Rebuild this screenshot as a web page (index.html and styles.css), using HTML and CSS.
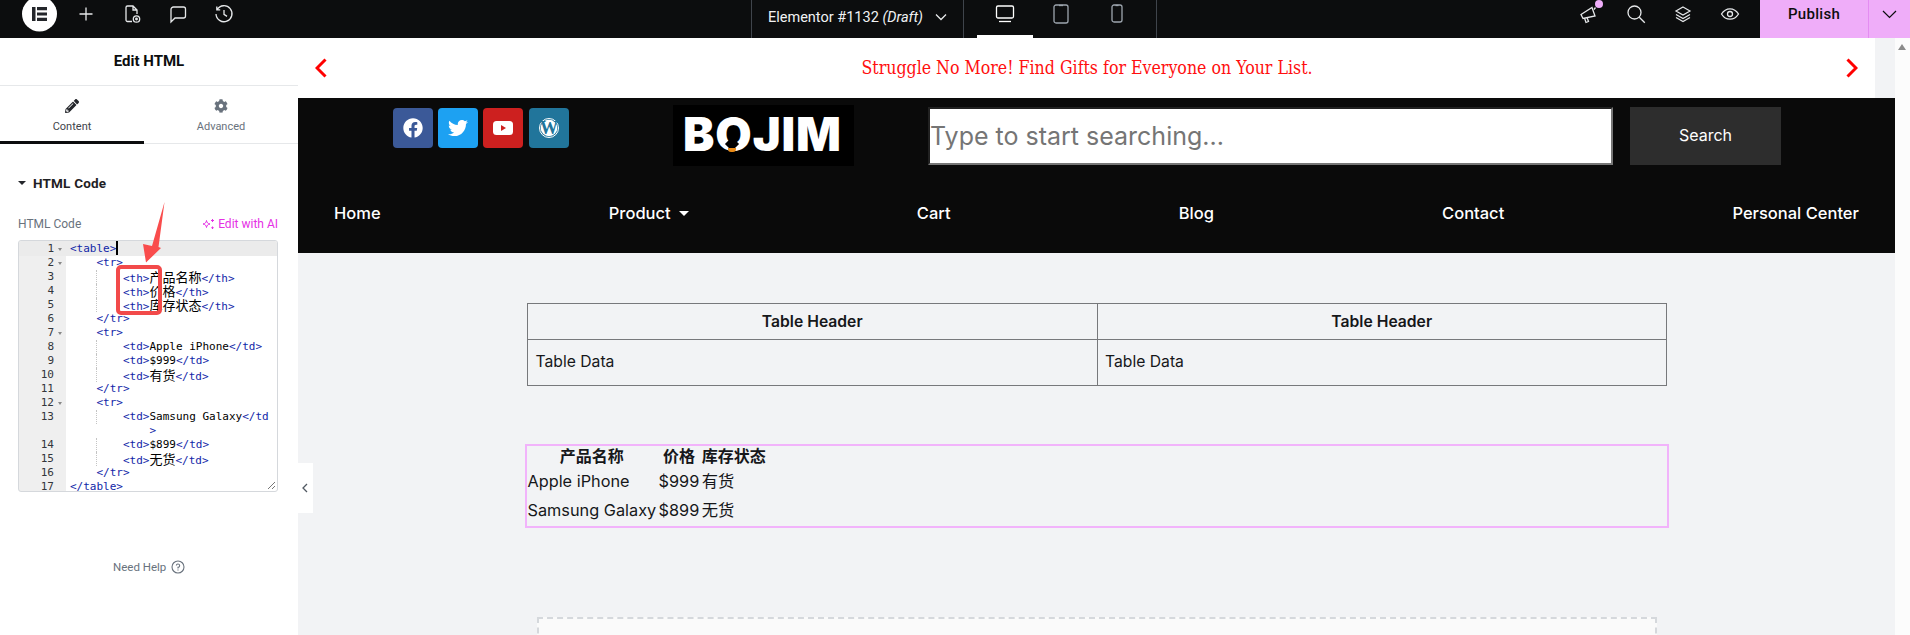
FILE: index.html
```html
<!DOCTYPE html>
<html lang="en">
<head>
<meta charset="utf-8">
<title>Edit HTML</title>
<link rel="stylesheet" href="styles.css">
</head>
<body>
<header class="topbar">
  <div class="tb-left">
    <svg class="e-logo" width="35" height="38" viewBox="0 0 35 38"><circle cx="17.5" cy="14" r="17.5" fill="#fff"/><path d="M10 7h3.5v14H10zM15 7h10v3.2H15zM15 12.4h10v3.2H15zM15 17.8h10V21H15z" fill="#24262b"/></svg>
    <svg class="tb-i" width="20" height="20" viewBox="0 0 20 20" fill="none" stroke="#e6e8ea" stroke-width="1.3"><path d="M10 3.5v13M3.5 10h13"/></svg>
    <svg class="tb-i" width="20" height="20" viewBox="0 0 20 20" fill="none" stroke="#e6e8ea" stroke-width="1.3"><path d="M10 17.5H5.5A1.5 1.5 0 0 1 4 16V3.5A1.5 1.5 0 0 1 5.5 2h5.5l4 4v4M11 2v4h4"/><circle cx="14.5" cy="15" r="3.2"/><circle cx="14.5" cy="15" r=".8"/></svg>
    <svg class="tb-i" width="20" height="20" viewBox="0 0 20 20" fill="none" stroke="#e6e8ea" stroke-width="1.3"><path d="M3 5.5A2.5 2.5 0 0 1 5.5 3h10A2 2 0 0 1 17.500 5v7a2 2 0 0 1-2 2H7l-4 4z"/></svg>
    <svg class="tb-i" width="20" height="20" viewBox="0 0 20 20" fill="none" stroke="#e6e8ea" stroke-width="1.3"><path d="M3.200 5.500A8 8 0 1 1 2 10M2.800 2.500v3.400h3.400M10 6v4.400l3 2"/></svg>
  </div>
  <div class="tb-center">
    <div class="doc-title"><span>Elementor #1132 <em>(Draft)</em></span>
      <svg width="12" height="8" viewBox="0 0 12 8" fill="none" stroke="#e6e8ea" stroke-width="1.300"><path d="M1 1.500l5 5 5-5"/></svg>
    </div>
    <div class="devices">
      <div class="dev active"><svg width="20" height="20" viewBox="0 0 20 20" fill="none" stroke="#fff" stroke-width="1.300"><rect x="1.500" y="2" width="17" height="12" rx="1.500"/><path d="M4 17.500h12"/></svg></div>
      <div class="dev"><svg width="16" height="20" viewBox="0 0 16 20" fill="none" stroke="#9da5ae" stroke-width="1.300"><rect x="1" y="1" width="14" height="18" rx="2"/><path d="M6 1.500h4"/></svg></div>
      <div class="dev"><svg width="12" height="19" viewBox="0 0 12 19" fill="none" stroke="#9da5ae" stroke-width="1.300"><rect x="1" y="1" width="10" height="17" rx="2"/><path d="M4.500 1.500h3"/></svg></div>
    </div>
  </div>
  <div class="tb-right">
    <span class="tb-r-i notify"><svg width="20" height="20" viewBox="0 0 20 20" fill="none" stroke="#e6e8ea" stroke-width="1.300"><path d="M2 10.500l11-7 3 8.500-12 2.500zM5.500 14l1.500 4.500 2.500-1L8 13.500M15 5.500l1.500-2"/></svg></span>
    <span class="tb-r-i"><svg width="20" height="20" viewBox="0 0 20 20" fill="none" stroke="#e6e8ea" stroke-width="1.300"><circle cx="8.500" cy="8.500" r="6.500"/><path d="M13.300 13.300l5.500 5.500"/></svg></span>
    <span class="tb-r-i"><svg width="20" height="20" viewBox="0 0 20 20" fill="none" stroke="#e6e8ea" stroke-width="1.200"><path d="M10 3l7 4-7 4-7-4zM3 10.500l7 4 7-4M3 13.500l7 4 7-4"/></svg></span>
    <span class="tb-r-i"><svg width="20" height="20" viewBox="0 0 20 20" fill="none" stroke="#e6e8ea" stroke-width="1.300"><path d="M1.500 10C4 6 7 4.800 10 4.800S16 6 18.500 10C16 14 13 15.200 10 15.200S4 14 1.500 10z"/><circle cx="10" cy="10" r="2.500"/></svg></span>
    <div class="publish">
      <span class="pub-text">Publish</span>
      <span class="pub-arrow"><svg width="15" height="9" viewBox="0 0 15 9" fill="none" stroke="#0c0d0e" stroke-width="1.200"><path d="M1 1l6.500 6.500L14 1"/></svg></span>
    </div>
  </div>
</header>

<div class="main">
  <aside class="sidebar">
    <h1 class="panel-title">Edit HTML</h1>
    <div class="tabs">
      <div class="tab on">
        <svg width="14" height="14" viewBox="0 0 512 512"><path fill="#24262b" d="M497.900 142.100l-46.100 46.100c-4.700 4.700-12.300 4.700-17 0l-111-111c-4.700-4.700-4.700-12.300 0-17l46.100-46.100c18.700-18.700 49.100-18.700 67.900 0l60.100 60.100c18.800 18.700 18.800 49.100 0 67.900zM284.200 99.800L21.600 362.400.4 483.900c-2.900 16.400 11.400 30.600 27.800 27.800l121.500-21.300 262.600-262.600c4.700-4.700 4.700-12.300 0-17l-111-111c-4.800-4.700-12.400-4.700-17.100 0zM124.100 339.900c-5.500-5.500-5.500-14.300 0-19.800l154-154c5.500-5.500 14.300-5.500 19.800 0s5.500 14.300 0 19.800l-154 154c-5.500 5.500-14.300 5.500-19.800 0zM88 424h48v36.300l-64.500 11.300-31.100-31.100L51.700 376H88v48z"/></svg>
        <span>Content</span>
      </div>
      <div class="tab">
        <svg width="14" height="14" viewBox="0 0 512 512"><path fill="#69727d" d="M487.400 315.700l-42.600-24.600c4.300-23.200 4.300-47 0-70.200l42.600-24.600c4.900-2.800 7.100-8.600 5.500-14-11.100-35.600-30-67.800-54.700-94.600-3.800-4.100-10-5.100-14.800-2.300L380.800 110c-17.900-15.400-38.500-27.300-60.800-35.100V25.800c0-5.600-3.900-10.500-9.400-11.700-36.700-8.200-74.300-7.800-109.200 0-5.500 1.200-9.400 6.100-9.400 11.700V75c-22.200 7.900-42.800 19.800-60.800 35.100L88.700 85.500c-4.900-2.800-11-1.900-14.800 2.300-24.700 26.700-43.600 58.900-54.700 94.600-1.700 5.400.6 11.200 5.500 14L67.300 221c-4.300 23.200-4.300 47 0 70.200l-42.600 24.600c-4.900 2.800-7.100 8.600-5.500 14 11.100 35.600 30 67.800 54.700 94.600 3.800 4.100 10 5.100 14.800 2.300l42.600-24.600c17.900 15.400 38.500 27.300 60.800 35.100v49.200c0 5.600 3.900 10.500 9.400 11.700 36.700 8.200 74.300 7.800 109.200 0 5.500-1.200 9.400-6.100 9.400-11.700v-49.200c22.200-7.900 42.800-19.800 60.800-35.100l42.600 24.600c4.900 2.800 11 1.900 14.800-2.300 24.700-26.700 43.600-58.900 54.700-94.600 1.500-5.500-.7-11.300-5.600-14.100zM256 336c-44.100 0-80-35.900-80-80s35.900-80 80-80 80 35.900 80 80-35.900 80-80 80z"/></svg>
        <span>Advanced</span>
      </div>
    </div>
    <div class="section-head"><i class="caret"></i><span>HTML Code</span></div>
    <div class="field-head">
      <span class="field-label">HTML Code</span>
      <span class="ai"><svg width="13" height="12" viewBox="0 0 13 12" fill="none" stroke="#e530e5" stroke-width="1"><path d="M4.500 2.500c.4 2.200 1.300 3.100 3.500 3.500-2.200.4-3.100 1.300-3.500 3.500C4.100 7.300 3.200 6.400 1 6c2.200-.4 3.100-1.300 3.500-3.500zM10.500 1v3M9 2.500h3M10.500 8.500v2.500M9.300 9.700h2.400"/></svg>Edit with AI</span>
    </div>
    <div class="editor">
      <div class="row act"><span class="num">1</span><span class="fold f"></span><span class="code"><span class="t">&lt;table&gt;</span><i class="cursor"></i></span></div>
      <div class="row"><span class="num">2</span><span class="fold f"></span><span class="code">    <span class="t">&lt;tr&gt;</span></span></div>
      <div class="row"><span class="num">3</span><span class="fold"></span><span class="code g">        <span class="t">&lt;th&gt;</span><span class="c">产品名称</span><span class="t">&lt;/th&gt;</span></span></div>
      <div class="row"><span class="num">4</span><span class="fold"></span><span class="code g">        <span class="t">&lt;th&gt;</span><span class="c">价格</span><span class="t">&lt;/th&gt;</span></span></div>
      <div class="row"><span class="num">5</span><span class="fold"></span><span class="code g">        <span class="t">&lt;th&gt;</span><span class="c">库存状态</span><span class="t">&lt;/th&gt;</span></span></div>
      <div class="row"><span class="num">6</span><span class="fold"></span><span class="code">    <span class="t">&lt;/tr&gt;</span></span></div>
      <div class="row"><span class="num">7</span><span class="fold f"></span><span class="code">    <span class="t">&lt;tr&gt;</span></span></div>
      <div class="row"><span class="num">8</span><span class="fold"></span><span class="code g">        <span class="t">&lt;td&gt;</span>Apple iPhone<span class="t">&lt;/td&gt;</span></span></div>
      <div class="row"><span class="num">9</span><span class="fold"></span><span class="code g">        <span class="t">&lt;td&gt;</span>$999<span class="t">&lt;/td&gt;</span></span></div>
      <div class="row"><span class="num">10</span><span class="fold"></span><span class="code g">        <span class="t">&lt;td&gt;</span><span class="c">有货</span><span class="t">&lt;/td&gt;</span></span></div>
      <div class="row"><span class="num">11</span><span class="fold"></span><span class="code">    <span class="t">&lt;/tr&gt;</span></span></div>
      <div class="row"><span class="num">12</span><span class="fold f"></span><span class="code">    <span class="t">&lt;tr&gt;</span></span></div>
      <div class="row"><span class="num">13</span><span class="fold"></span><span class="code g">        <span class="t">&lt;td&gt;</span>Samsung Galaxy<span class="t">&lt;/td</span></span></div>
      <div class="row"><span class="num"></span><span class="fold"></span><span class="code">            <span class="t">&gt;</span></span></div>
      <div class="row"><span class="num">14</span><span class="fold"></span><span class="code g">        <span class="t">&lt;td&gt;</span>$899<span class="t">&lt;/td&gt;</span></span></div>
      <div class="row"><span class="num">15</span><span class="fold"></span><span class="code g">        <span class="t">&lt;td&gt;</span><span class="c">无货</span><span class="t">&lt;/td&gt;</span></span></div>
      <div class="row"><span class="num">16</span><span class="fold"></span><span class="code">    <span class="t">&lt;/tr&gt;</span></span></div>
      <div class="row"><span class="num">17</span><span class="fold"></span><span class="code"><span class="t">&lt;/table&gt;</span></span></div>
      <svg class="resize" width="9" height="9" viewBox="0 0 9 9" stroke="#777" fill="none"><path d="M1 8l7-7M5 8l3-3"/></svg>
    </div>
    <div class="help"><span>Need Help</span><svg width="14" height="14" viewBox="0 0 14 14" fill="none" stroke="#69727d" stroke-width="1.100"><circle cx="7" cy="7" r="6"/><path d="M5.300 5.500A1.700 1.700 0 1 1 7 7.400v1M7 9.500v1.100"/></svg></div>
    <div class="mark-box"></div>
    <svg class="mark-arrow" width="24" height="64" viewBox="0 0 24 64"><path fill="#f94c4c" d="M22.500 0L16.500 45l2.500 1-15 14.500L1 42l9 2z"/></svg>
  </aside>
  <div class="collapse"><svg width="6" height="10" viewBox="0 0 6 10" fill="none" stroke="#515962" stroke-width="1.300"><path d="M5 1L1 5l4 4"/></svg></div>

  <main class="canvas">
    <div class="banner">
      <svg width="12" height="20" viewBox="0 0 12 20" fill="none" stroke="#ff0000" stroke-width="3"><path d="M10.500 1.500L2 10l8.500 8.500"/></svg>
      <span class="banner-text">Struggle No More! Find Gifts for Everyone on Your List.</span>
      <svg width="12" height="20" viewBox="0 0 12 20" fill="none" stroke="#ff0000" stroke-width="3"><path d="M1.500 1.500L10 10l-8.500 8.500"/></svg>
    </div>
    <div class="site-head">
      <div class="head-row">
        <div class="social">
          <a class="soc fb"><svg width="20" height="20" viewBox="0 0 512 512"><path fill="#fff" d="M504 256C504 119 393 8 256 8S8 119 8 256c0 123.780 90.690 226.380 209.250 245V327.690h-63V256h63v-54.640c0-62.150 37-96.480 93.670-96.480 27.140 0 55.520 4.840 55.520 4.840v61h-31.280c-30.800 0-40.410 19.120-40.410 38.730V256h68.780l-11 71.690h-57.780V501C413.310 482.380 504 379.780 504 256z"/></svg></a>
          <a class="soc tw"><svg width="20" height="20" viewBox="0 0 512 512"><path fill="#fff" d="M459.370 151.716c.325 4.548.325 9.097.325 13.645 0 138.720-105.583 298.558-298.558 298.558-59.452 0-114.680-17.219-161.137-47.106 8.447.974 16.568 1.299 25.340 1.299 49.055 0 94.213-16.568 130.274-44.832-46.132-.975-84.792-31.188-98.112-72.772 6.498.974 12.995 1.624 19.818 1.624 9.421 0 18.843-1.300 27.614-3.573-48.081-9.747-84.143-51.980-84.143-102.985v-1.299c13.969 7.797 30.214 12.670 47.431 13.319-28.264-18.843-46.781-51.005-46.781-87.391 0-19.492 5.197-37.360 14.294-52.954 51.655 63.675 129.300 105.258 216.365 109.807-1.624-7.797-2.599-15.918-2.599-24.040 0-57.828 46.782-104.934 104.934-104.934 30.213 0 57.502 12.670 76.670 33.137 23.715-4.548 46.456-13.320 66.599-25.340-7.798 24.366-24.366 44.833-46.132 57.827 21.117-2.273 41.584-8.122 60.426-16.243-14.292 20.791-32.161 39.308-52.628 54.253z"/></svg></a>
          <a class="soc yt"><svg width="20" height="14" viewBox="0 0 20 14"><rect width="20" height="14" rx="3.500" fill="#fff"/><path d="M8 4l5 3-5 3z" fill="#cd201f"/></svg></a>
          <a class="soc wp"><svg width="20" height="20" viewBox="0 0 20 20"><circle cx="10" cy="10" r="9.500" fill="none" stroke="#fff"/><circle cx="10" cy="10" r="8.300" fill="#fff"/><text class="wp-w" x="10" y="16" text-anchor="middle">W</text></svg></a>
        </div>
        <div class="logo"><span class="logo-text">BOJIM</span><i class="bulb-neck"></i><i class="bulb-base"></i></div>
        <div class="search">
          <input class="search-input" type="text" placeholder="Type to start searching...">
          <button class="search-btn" type="button">Search</button>
        </div>
      </div>
      <nav class="nav">
        <a>Home</a>
        <a class="has-sub">Product<i class="nav-caret"></i></a>
        <a>Cart</a>
        <a>Blog</a>
        <a>Contact</a>
        <a>Personal Center</a>
      </nav>
    </div>

    <table class="t1">
      <tr><th class="half">Table Header</th><th>Table Header</th></tr>
      <tr><td>Table Data</td><td>Table Data</td></tr>
    </table>

    <div class="widget">
      <table class="t2">
        <tr><th>产品名称</th><th>价格</th><th>库存状态</th></tr>
        <tr><td>Apple iPhone</td><td>$999</td><td>有货</td></tr>
        <tr><td>Samsung Galaxy</td><td>$899</td><td>无货</td></tr>
      </table>
    </div>

    <div class="dropzone"></div>
  </main>
  <div class="scrollbar"><i class="sb-up"></i></div>
</div>
</body>
</html>
```

FILE: styles.css
```css
* { box-sizing: border-box; }
html, body { margin: 0; padding: 0; height: 635px; overflow: hidden; }
body { font-family: Roboto, "Noto Sans CJK SC", sans-serif; background: #fff; color: #0c0d0e; }
i { font-style: normal; }

/* top bar */
.topbar { display: flex; height: 38px; background: #0c0d0e; overflow: hidden; position: relative; }
.tb-left { display: flex; flex: none; align-items: flex-start; width: 751px; padding-left: 22px; }
.e-logo { display: block; flex: none; }
.tb-i { flex: none; margin-top: 4px; margin-right: 26px; }
.e-logo + .tb-i { margin-left: 19px; }
.tb-center { display: flex; flex: none; height: 38px; }
.doc-title { display: flex; align-items: center; gap: 12px; width: 213px; padding: 0 0 4px 16px; color: #f1f2f3; font-size: 14.500px; border-left: 1px solid #3f444b; border-right: 1px solid #3f444b; }
.doc-title em { font-style: italic; }
.devices { display: flex; width: 193px; padding-left: 13px; border-right: 1px solid #3f444b; }
.dev { width: 56px; display: flex; justify-content: center; padding-top: 4px; height: 38px; }
.dev.active { border-bottom: 3px solid #fff; }
.tb-right { display: flex; flex: 1; align-items: flex-start; padding-left: 408px; }
.tb-r-i { width: 47px; flex: none; display: flex; justify-content: center; padding-top: 4px; position: relative; }
.notify::after { content: ""; position: absolute; top: 0; right: 9px; width: 8px; height: 8px; border-radius: 50%; background: #efadf9; }
.publish { display: flex; flex: none; width: 150px; height: 38px; margin-left: 7px; background: #efadf9; font-size: 15px; font-weight: 500; letter-spacing: .3px; }
.pub-text { width: 109px; text-align: center; line-height: 28px; border-right: 1px solid #e48cf2; }
.pub-arrow { flex: 1; display: flex; justify-content: center; padding-top: 10px; }

.main { display: flex; height: 597px; position: relative; }

/* panel */
.sidebar { width: 298px; flex: none; background: #fff; position: relative; }
.panel-title { margin: 0; height: 48px; border-bottom: 1px solid #e6e8ea; font-size: 15px; font-weight: 700; text-align: center; line-height: 47px; color: #0c0d0e; }
.tabs { display: flex; height: 58px; border-bottom: 1px solid #e6e8ea; }
.tab { display: flex; flex-direction: column; align-items: center; gap: 7px; padding-top: 13px; font-size: 11px; color: #69727d; width: 154px; }
.tab.on { width: 144px; color: #3f444b; border-bottom: 3px solid #0c0d0e; height: 58px; }
.section-head { display: flex; align-items: center; gap: 7px; margin: 30px 0 0 19px; font-size: 13.500px; font-weight: 700; color: #1f2124; height: 18px; letter-spacing: .2px; }
.caret { width: 0; height: 0; border: 3.500px solid transparent; border-left-width: 4px; border-right-width: 4px; border-top: 4.500px solid #24262b; border-bottom: 0; margin-left: -1px; }
.field-head { display: flex; justify-content: space-between; align-items: center; margin: 24px 20px 0 18px; height: 16px; font-size: 12px; }
.field-label { color: #69727d; }
.ai { color: #e530e5; display: flex; align-items: center; gap: 3px; }

.editor { position: relative; margin: 8px 20px 0 18px; height: 252px; border: 1px solid #d5d8dc; border-radius: 3px; overflow: hidden; padding-top: 0; background: linear-gradient(90deg, #efefef 47px, #fff 47px); font-family: "DejaVu Sans Mono", "Noto Sans CJK SC", monospace; font-size: 11px; line-height: 14px; color: #000; }
.row { display: flex; height: 14px; white-space: pre; }
.row.act { height: 15px; background: #ebebeb; padding-top: 1px; }
.num { width: 35px; flex: none; text-align: right; color: #33363b; font-size: 11px; }
.fold { width: 12px; flex: none; position: relative; }
.fold.f::after { content: ""; position: absolute; left: 4px; top: 6px; border: 2.500px solid transparent; border-top: 3px solid #888; border-bottom: 0; }
.code { padding-left: 4px; position: relative; flex: 1; }
.code.g::before { content: ""; position: absolute; left: 29.500px; top: 0; bottom: 0; border-left: 1px dotted #c4c4c4; }
.t { color: #1126a8; }
.c { font-family: "Noto Sans CJK SC", sans-serif; font-size: 13px; line-height: 14px; }
.cursor { display: inline-block; width: 2px; height: 14px; margin-top: -1px; background: #000; vertical-align: top; }
.resize { position: absolute; right: 1px; bottom: 1px; }

.help { display: flex; align-items: center; gap: 5px; margin-top: 68px; padding-left: 113px; font-size: 11.500px; color: #69727d; }

.mark-box { position: absolute; left: 116px; top: 227px; width: 46px; height: 50px; border: 4px solid #f24a4a; border-radius: 5px; }
.mark-arrow { position: absolute; left: 142px; top: 164px; }

.collapse { position: absolute; left: 298px; top: 425px; width: 15px; height: 50px; background: #fff; display: flex; align-items: center; justify-content: center; padding-right: 1px; z-index: 2; }

/* canvas */
.canvas { flex: 1; min-width: 0; background: #f2f3f5; }
.scrollbar { width: 15px; flex: none; background: #fcfcfc; position: relative; }
.sb-up { position: absolute; left: 3px; top: 6px; border: 4.500px solid transparent; border-bottom: 6px solid #8b8b8b; border-top: 0; }
.banner { display: flex; align-items: center; justify-content: space-between; height: 60px; margin-right: 20px; padding: 0 17px; background: #fff; }
.banner-text { color: #ff0f0f; font-family: "DejaVu Serif Condensed", "DejaVu Serif", serif; font-size: 17.600px; margin-left: 1px; }

.site-head { height: 155px; background: #0a0a0a; font-family: Inter, sans-serif; }
.head-row { display: flex; align-items: flex-start; height: 76px; padding-left: 95px; }
.social { display: flex; margin-top: 10px; width: 176px; }
.soc { width: 40px; height: 40px; border-radius: 4px; display: flex; align-items: center; justify-content: center; margin-right: 5px; flex: none; }
.soc.yt { margin-right: 6px; }
.fb { background: #3b5998; }
.tw { background: #1da1f2; }
.yt { background: #cd201f; }
.wp { background: #21759b; }
.wp-w { font-family: "Liberation Serif", serif; font-size: 18px; font-weight: 700; fill: #21759b; }
.logo { position: relative; margin: 7px 0 0 104px; width: 181px; height: 61px; background: #000; flex: none; }
.logo-text { position: absolute; left: 10px; top: 2px; color: #fff; font-family: Inter, sans-serif; font-weight: 900; font-size: 47px; line-height: 54px; letter-spacing: .9px; }
.bulb-neck { position: absolute; left: 54px; top: 34px; width: 10px; height: 10px; background: #000; transform: rotate(45deg); }
.bulb-base { position: absolute; left: 55px; top: 43px; width: 8px; height: 4px; background: #e98a15; border-radius: 0 0 3px 3px; }
.search { display: flex; margin: 9px 0 0 74px; }
.search-input { width: 685px; height: 58px; padding: 1px 0; border: 2px inset #767676; background: #fff; font-family: Inter, sans-serif; font-size: 25px; color: #757575; outline: 0; }
.search-input::placeholder { color: #757575; opacity: 1; }
.search-btn { width: 151px; height: 58px; margin-left: 17px; padding: 0 0 2px; border: 0; background: #2d2d2d; color: #fff; font-family: Inter, sans-serif; font-size: 16px; }
.nav { display: flex; justify-content: space-between; align-items: center; height: 79px; padding: 0 36px 1px; color: #fff; font-size: 16.500px; font-weight: 500; }
.has-sub { display: flex; align-items: center; gap: 8px; }
.nav-caret { width: 0; height: 0; border: 5px solid transparent; border-top: 5px solid #fff; border-bottom: 0; }

/* tables */
table { font-family: Inter, "Noto Sans CJK SC", sans-serif; color: #16171a; }
.t1 { width: 1140px; margin: 50px 0 0 229px; border-collapse: collapse; table-layout: fixed; font-size: 15.700px; }
.t1 th, .t1 td { border: 1px solid #77787b; padding: 0 7.500px; }
.t1 th.half { width: 569.500px; }
.t1 th { height: 36px; padding-bottom: 1px; font-weight: 600; text-align: center; }
.t1 td { height: 46px; padding-bottom: 2px; text-align: left; }
.widget { margin: 58px 0 0 227px; width: 1144px; height: 84px; border: 2px solid #f2b3fb; }
.t2 { border-collapse: separate; border-spacing: 0; font-size: 16.300px; line-height: 18px; }
.t2 th, .t2 td { padding: 0 1.200px; }
.t2 th { height: 20px; font-size: 16px; font-weight: 600; text-align: center; }
.t2 td { height: 29.500px; text-align: left; }
.t2 td:first-child, .t2 th:first-child { padding-left: .5px; }
.dropzone { margin: 89px 0 0 239px; width: 1120px; height: 100px; border: 2px dashed #d5d8dc; background: #fafafa; }
```
